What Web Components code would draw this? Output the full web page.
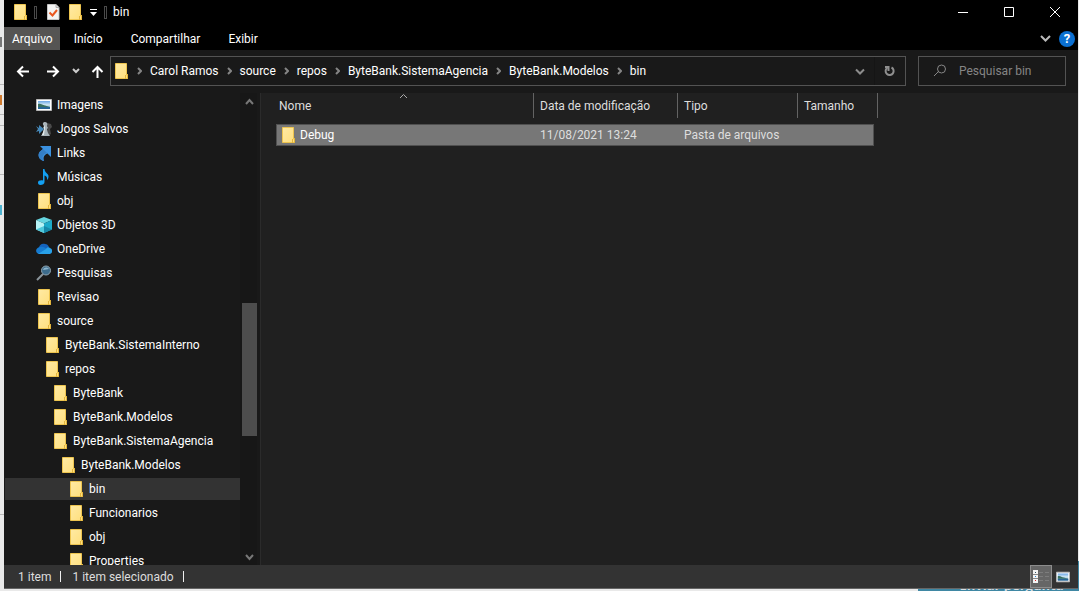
<!DOCTYPE html>
<html lang="pt-BR">
<head>
<meta charset="utf-8">
<meta name="viewport" content="width=device-width, initial-scale=1">
<title>bin</title>
<style>
  html, body { margin: 0; height: 100%; }
  body {
    font: 12px/16px Roboto, "Open Sans", sans-serif;
    color: #fff;
    background: #e9e9e9;
    overflow: hidden;
  }
</style>
</head>
<body>
<desktop-backdrop></desktop-backdrop>
<explorer-window>
  <title-bar slot="title">bin</title-bar>
  <ribbon-tabs slot="ribbon"></ribbon-tabs>
  <address-row slot="address">
    <path-crumb>Carol Ramos</path-crumb>
    <path-crumb>source</path-crumb>
    <path-crumb>repos</path-crumb>
    <path-crumb>ByteBank.SistemaAgencia</path-crumb>
    <path-crumb>ByteBank.Modelos</path-crumb>
    <path-crumb>bin</path-crumb>
  </address-row>
  <nav-pane slot="nav">
    <nav-item icon="picture">Imagens</nav-item>
    <nav-item icon="games">Jogos Salvos</nav-item>
    <nav-item icon="link">Links</nav-item>
    <nav-item icon="music">Músicas</nav-item>
    <nav-item icon="folder">obj</nav-item>
    <nav-item icon="cube">Objetos 3D</nav-item>
    <nav-item icon="cloud">OneDrive</nav-item>
    <nav-item icon="lens">Pesquisas</nav-item>
    <nav-item icon="folder">Revisao</nav-item>
    <nav-item icon="folder">source</nav-item>
    <nav-item icon="folder" level="1">ByteBank.SistemaInterno</nav-item>
    <nav-item icon="folder" level="1">repos</nav-item>
    <nav-item icon="folder" level="2">ByteBank</nav-item>
    <nav-item icon="folder" level="2">ByteBank.Modelos</nav-item>
    <nav-item icon="folder" level="2">ByteBank.SistemaAgencia</nav-item>
    <nav-item icon="folder" level="3">ByteBank.Modelos</nav-item>
    <nav-item icon="folder" level="4" selected>bin</nav-item>
    <nav-item icon="folder" level="4">Funcionarios</nav-item>
    <nav-item icon="folder" level="4">obj</nav-item>
    <nav-item icon="folder" level="4">Properties</nav-item>
  </nav-pane>
  <file-list slot="files"></file-list>
  <status-bar slot="status">
    <span>1 item</span>
    <span>1 item selecionado</span>
  </status-bar>
</explorer-window>

<script>
const RESET = `
  *, *::before, *::after { box-sizing: border-box; }
  button { font: inherit; color: inherit; background: none; border: 0; padding: 0; margin: 0;
    display: inline-flex; align-items: center; justify-content: center; }
  a { color: inherit; text-decoration: none; }
  :focus-visible { outline: 1px solid #aaa; }
`;

function define(name, css, html, setup) {
  const template = document.createElement('template');
  template.innerHTML = `<style>${RESET}${css}</style>${html}`;
  customElements.define(name, class extends HTMLElement {
    constructor() {
      super();
      this.attachShadow({ mode: 'open' }).append(template.content.cloneNode(true));
    }
    connectedCallback() { if (setup) setup(this, this.shadowRoot); }
  });
}

const line = (d, color, width, w = 16, h = 16) =>
  `<svg width="${w}" height="${h}" viewBox="0 0 ${w} ${h}" fill="none" stroke="${color}" stroke-width="${width}"><path d="${d}"/></svg>`;
const art = (body, w = 16, h = 16) => `<svg width="${w}" height="${h}" viewBox="0 0 ${w} ${h}">${body}</svg>`;

const ICONS = {
  folder: art(`<defs><linearGradient id="f" x1="0" y1="0" x2="1" y2="1"><stop offset="0" stop-color="#ffeaa4"/><stop offset="1" stop-color="#ffdf7c"/></linearGradient></defs>
    <path d="M2.5.5h11v11.5h1v3.5h-12z" fill="url(#f)" stroke="#edc44f"/><path d="M12.500 12v4M14.500 11v5" stroke="#e3b53c" fill="none"/>`),
  check: art(`<path d="M2.500.500h8.500l3 3v12h-11.500z" fill="#f3f3f3" stroke="#c4c4c4"/><path d="M11 .5v3h3" fill="#ddd" stroke="#aaa"/><path d="M4.500 8.500l3 3 4.500-5.500" fill="none" stroke="#e8561f" stroke-width="2"/>`),
  picture: art(`<defs><linearGradient id="s" x1="0" y1="0" x2="0" y2="1"><stop offset="0" stop-color="#6ca7e8"/><stop offset=".5" stop-color="#d5ebf4"/><stop offset="1" stop-color="#3979a2"/></linearGradient></defs>
    <path d="M.5 2.500h15v11H.5z" fill="#fff" stroke="#b7b7b7"/><path d="M2 4h12v8H2z" fill="url(#s)"/><path d="M2 7c3-1 4 1 7 1.500L14 10H2z" fill="#397060"/><path d="M2 10h12v2H2z" fill="#286595"/>`),
  games: art(`<path d="M11 2l4 1 1 3-2 2 1 5-3 2z" fill="#4a4a4a"/><path d="M9 1c2 0 3 2 2 4l1 2-1 1 1 4 2 3H5l2-3 1-4-1-1 1-2C6 3 7 1 9 1z" fill="#a9b3b8"/><path d="M9 2c-1 1 0 3 0 5L8 14H6l2-6V6z" fill="#e3e9ea"/><path d="M0 5l3 2V4l5 4-5 5v-3l-3 1 2-3z" fill="#4588b9"/>`),
  link: art(`<path d="M4 1h11v11l-3.500-3.500C8 10 7 12 8 16 3 15 1 10 4 6.500L7 4z" fill="#3b91df"/><path d="M7 4L4 6.500C1 10 3 15 8 16 5 12 7 9 11 8" fill="#347fc7"/>`),
  music: art(`<path d="M7 0h1.500c0 4 4 4 4 7.500 0 1.500-.5 2.500-1.500 3.500.5-3-1-4-2.500-4.500V13c0 2-2 3-4 3S2 15 2 13.500C2 12 4 11 7 11.500z" fill="#13a0f2"/>`),
  cube: art(`<path d="M8 0l8 3-8 3.500L0 3z" fill="#65d5e0"/><path d="M0 3l8 3.500V16l-8-3.500z" fill="#b6f3f6"/><path d="M16 3L8 6.500V16l8-3.500z" fill="#1caac9"/><path d="M0 12.500L8 9v7z" fill="#4fc9dc"/><path d="M8 9l8 3.500L8 16z" fill="#1688a8"/>`),
  cloud: art(`<path d="M3 7c0-3 3-5 6-4 2 0 3 1 4 3l-3 4-7-1z" fill="#1463bd"/><path d="M4 6c3-1 5 1 7 2l-3 5H3c-4-1-4-6 1-7z" fill="#167bd0"/><path d="M2 13l8-5c1-2 3-2 4-1 3 1 3 5 0 6z" fill="#28a0e8"/>`),
  lens: art(`<path d="M1 15l6-6" stroke="#8b959b" stroke-width="2"/><circle cx="10" cy="5.500" r="4.500" fill="#3d6c8c" stroke="#91a4af"/><path d="M7 5c1-3 4-3 6-1-2 0-3 1-6 1z" fill="#8bb4cc"/>`),
};

define('shell-icon', `:host { display: block; width: 16px; height: 16px; flex: none; } svg { display: block; }`, '',
  (el, root) => { if (!root.querySelector('svg')) root.append(document.createRange().createContextualFragment(ICONS[el.getAttribute('name')])); });

/* The web page that shows past the window's edges. */
define('desktop-backdrop', `
  :host { position: absolute; inset: 0; z-index: -1; overflow: hidden; }
  .rule { position: absolute; left: 0; width: 4px; height: 1px; background: #b8b8b8; }
  .mark { position: absolute; left: 0; width: 2px; height: 10px; background: #cf7a2f; }
  .action { position: absolute; right: 0; bottom: 0; width: 161px; height: 30px; background: #3f87a3; display: flex;
    align-items: flex-end; justify-content: center; padding-left: 26px; }
  .action span { font: bold 13px/12px "Open Sans", sans-serif; color: #d5dde2; }
`, `<div class="rule" style="top:84px"></div><div class="rule" style="top:114px"></div><div class="rule" style="top:125px"></div>
  <div class="rule" style="top:174px"></div><div class="rule" style="top:514px"></div>
  <div class="mark" style="top:95px"></div><div class="mark" style="top:205px;background:#4bb1cf"></div>
  <div class="mark" style="top:37px;background:#777"></div>
  <div class="action"><span aria-hidden="true">Enviar pergunta</span></div>`);

define('explorer-window', `
  :host { display: grid; grid-template: 27px 23px 43px minmax(0, 1fr) 23px / 257px minmax(0, 1fr);
    height: calc(100vh - 3px); margin: 0 1px 2px 4px; background: #202020; border-bottom: 1px solid #666; }
  .wide { grid-column: 1 / -1; display: grid; }
  .cell { display: grid; min-height: 0; }
`, `<div class="wide"><slot name="title"></slot></div>
  <div class="wide"><slot name="ribbon"></slot></div>
  <div class="wide"><slot name="address"></slot></div>
  <div class="cell"><slot name="nav"></slot></div>
  <div class="cell"><slot name="files"></slot></div>
  <div class="wide"><slot name="status"></slot></div>`);

define('title-bar', `
  :host { display: flex; align-items: stretch; background: #000; }
  .quick { display: flex; align-items: center; padding-left: 8px; height: 24px; }
  .bar { width: 3px; height: 13px; border: 1px solid #4a4a4a; }
  .bar.first { margin: 0 8px 0 6px; }
  .folder { margin-left: 6px; }
  .more { width: 21px; }
  h1 { flex: 1; margin: 0 0 0 6px; font: inherit; line-height: 24px; }
  .controls button { width: 46px; height: 23px; }
`, `<div class="quick">
    <shell-icon name="folder"></shell-icon><span class="bar first"></span>
    <button aria-label="Propriedades"><shell-icon name="check"></shell-icon></button>
    <button class="folder" aria-label="Nova pasta"><shell-icon name="folder"></shell-icon></button>
    <button class="more" aria-label="Personalizar">${art('<path d="M1 1h7v1H1zM1 4h7L4.500 8z" fill="#fff"/>', 9, 8)}</button>
    <span class="bar"></span>
  </div>
  <h1><slot></slot></h1>
  <div class="controls"><button aria-label="Minimizar">${line('M0 5.500h10', '#fff', 1, 10, 10)}</button><button aria-label="Maximizar">${line('M.5.5h9v9h-9z', '#fff', 1, 10, 10)}</button><button aria-label="Fechar">${line('M0 0l10 10M10 0L0 10', '#fff', 1, 10, 10)}</button></div>`);

define('ribbon-tabs', `
  :host { display: flex; background: #000; }
  nav { display: flex; flex: 1; }
  a { display: flex; align-items: center; padding: 0 14px; }
  a.file { background: #555453; padding: 0 7px 0 8px; }
  .tools { display: flex; align-items: center; gap: 8px; padding-right: 3px; }
  .help { width: 16px; height: 16px; border-radius: 50%; background: #0a6fd1; font-weight: 700; font-size: 13px; }
`, `<nav><a class="file" href="#arquivo">Arquivo</a><a href="#inicio">Início</a><a href="#compartilhar">Compartilhar</a><a href="#exibir">Exibir</a></nav>
  <div class="tools"><button aria-label="Expandir faixa">${line('M1 1l4.500 4.500L10 1', '#bbb', 2, 11, 8)}</button><button class="help">?</button></div>`);

define('path-crumb', `
  :host { display: flex; align-items: center; }
  svg { display: block; margin: 0 8px; flex: none; }
  a { white-space: nowrap; }
`, `${line('M1 1l3 3-3 3', '#858585', 2, 5, 8)}<a href="#"><slot></slot></a>`);

define('address-row', `
  :host { display: flex; align-items: center; background: #191919; padding: 0 12px 1px 4px; }
  .arrow { width: 30px; height: 30px; }
  .recent { width: 16px; height: 30px; }
  .up { width: 26px; height: 30px; }
  .path { flex: 1; min-width: 0; display: flex; align-items: center; height: 30px; border: 1px solid #535353; padding-left: 2px; }
  .crumbs { display: flex; flex: 1; min-width: 0; overflow: hidden; }
  .drop, .reload { width: 30px; height: 28px; }
  .drop { border-right: 1px solid #151515; }
  .search { width: 148px; height: 30px; margin-left: 12px; border: 1px solid #535353; display: flex; align-items: center; padding-left: 14px; }
  .search svg { flex: none; margin-right: 12px; }
  input { flex: 1; min-width: 0; border: 0; padding: 0; background: none; color: #ddd; font: inherit; outline: 0; }
  input::placeholder { color: #858585; opacity: 1; }
`, `<button class="arrow" aria-label="Voltar">${line('M13 7.500H2M7 2.500l-5 5 5 5', '#fff', 2, 14, 15)}</button>
  <button class="arrow" aria-label="Avançar">${line('M1 7.500h11M7 2.500l5 5-5 5', '#fff', 2, 14, 15)}</button>
  <button class="recent" aria-label="Locais recentes">${line('M1 1l3 3 3-3', '#ccc', 2, 8, 6)}</button>
  <button class="up" aria-label="Acima">${line('M6.500 14V3M1.500 8l5-5 5 5', '#fff', 2, 13, 15)}</button>
  <div class="path"><shell-icon name="folder"></shell-icon><div class="crumbs"><slot></slot></div>
    <button class="drop" aria-label="Locais anteriores">${line('M1 2.500l4 4 4-4', '#8c8c8c', 2, 10, 8)}</button>
    <button class="reload" aria-label="Atualizar">${line('M7.500 2.500a4 4 0 1 1-4.500.500M1 2h3.500v4', '#8f8f8f', 2, 12, 12)}</button></div>
  <label class="search">${line('M1 12l5-5', '#868686', 1, 14, 14).replace('</svg>', '<circle cx="8.500" cy="5" r="4"/></svg>')}<input type="text" aria-label="Pesquisar bin" placeholder="Pesquisar bin"></label>`);

define('nav-item', `
  :host { display: block; flex: none; }
  a { display: flex; align-items: center; gap: 5px; height: 22px; margin: 1px 0 1px 1px; white-space: nowrap;
    padding-left: calc(31px + var(--level, 0) * 8px); }
  :host([selected]) a { background: #333; }
`, `<a href="#"><shell-icon></shell-icon><slot></slot></a>`,
  (el, root) => {
    el.style.setProperty('--level', el.getAttribute('level') || 0);
    const icon = document.createElement('shell-icon');
    icon.setAttribute('name', el.getAttribute('icon'));
    root.querySelector('shell-icon').replaceWith(icon);
  });

define('nav-pane', `
  :host { display: flex; min-height: 0; background: #191919; border-right: 1px solid #2b2b2b; }
  nav { flex: 1; min-width: 0; overflow: hidden; display: flex; flex-direction: column; }
  .scroll { width: 17px; margin: 0 3px 0 0; padding-left: 2px; background: #171717; display: flex; flex-direction: column; }
  .scroll button { height: 17px; flex: none; }
  .thumb { flex: 133; background: #4d4d4d; }
  .before { flex: 193; } .after { flex: 112; }
`, `<nav aria-label="Pastas"><slot></slot></nav>
  <div class="scroll"><button aria-label="Rolar para cima">${line('M1 6l3.500-4L8 6', '#777', 2, 9, 8)}</button><i class="before"></i><i class="thumb"></i><i class="after"></i><button aria-label="Rolar para baixo">${line('M1 2l3.500 4L8 2', '#777', 2, 9, 8)}</button></div>`);

define('file-list', `
  :host { display: block; padding-left: 15px; background: #202020; }
  table { border-collapse: separate; border-spacing: 0; table-layout: fixed; width: 602px; }
  th, td { padding: 0 0 0 6px; text-align: left; font-weight: 400; white-space: nowrap; }
  th { height: 25px; border-right: 1px solid #636363; color: #dedede; position: relative; }
  th:nth-child(4) { border-right: 0; }
  th:first-child, td:first-child { padding-left: 3px; }
  th svg { position: absolute; top: 0; left: 50%; margin-left: -6px; }
  tbody::before { content: ""; display: table-row; height: 6px; }
  td { height: 22px; background: #777; border: solid #505050; border-width: 1px 0; color: #dedede; }
  td:first-child { border-left-width: 1px; color: #fff; }
  td:nth-child(4) { border-right-width: 1px; }
  td:last-child { background: none; border: 0; }
  th:last-child, td:last-child { padding: 0; }
  .name { display: flex; align-items: center; gap: 4px; }
`, `<table>
    <colgroup><col style="width:258px"><col style="width:144px"><col style="width:120px"><col style="width:76px"><col style="width:4px"></colgroup>
    <thead><tr><th aria-sort="ascending">Nome${line('M1 5l3.500-3.500L8 5', '#aaa', 1, 9, 6)}</th><th>Data de modificação</th><th>Tipo</th><th>Tamanho</th><th></th></tr></thead>
    <tbody><tr aria-selected="true"><td><a class="name" href="#"><shell-icon name="folder"></shell-icon>Debug</a></td><td>11/08/2021 13:24</td><td>Pasta de arquivos</td><td></td><td></td></tr></tbody>
  </table>`);

define('status-bar', `
  :host { display: flex; align-items: center; background: #333; color: #dedede; padding-left: 14px; }
  .texts { display: flex; flex: 1; }
  ::slotted(span) { padding-right: 10px; margin-right: 11px; background: linear-gradient(#eee, #eee) right center / 1px 11px no-repeat; }
  .views { display: flex; align-self: stretch; padding-right: 4px; }
  button { width: 22px; }
  button.on { background: #666; border: 1px solid #8c8c8c; }
  .large svg { width: 14px; height: 14px; }
`, `<div class="texts"><slot></slot></div>
  <div class="views"><button class="on" aria-label="Detalhes">${art('<path d="M0 0h5v13H0z" fill="#f4f4f4"/><path d="M0 4.500h5M0 8.500h5" stroke="#888"/><path d="M2 2h1v1h-1z" fill="#356"/><path d="M2 6h1v1h-1z" fill="#28d"/><path d="M2 10h1v1h-1z" fill="#d22"/><path d="M6 2.500h4m2 0h4M6 6.500h4m2 0h4M6 10.500h4m2 0h4" stroke="#7d7d7d"/>', 16, 13)}</button>
  <button class="large" aria-label="Ícones grandes">${ICONS.picture}</button></div>`);
</script>
</body>
</html>
